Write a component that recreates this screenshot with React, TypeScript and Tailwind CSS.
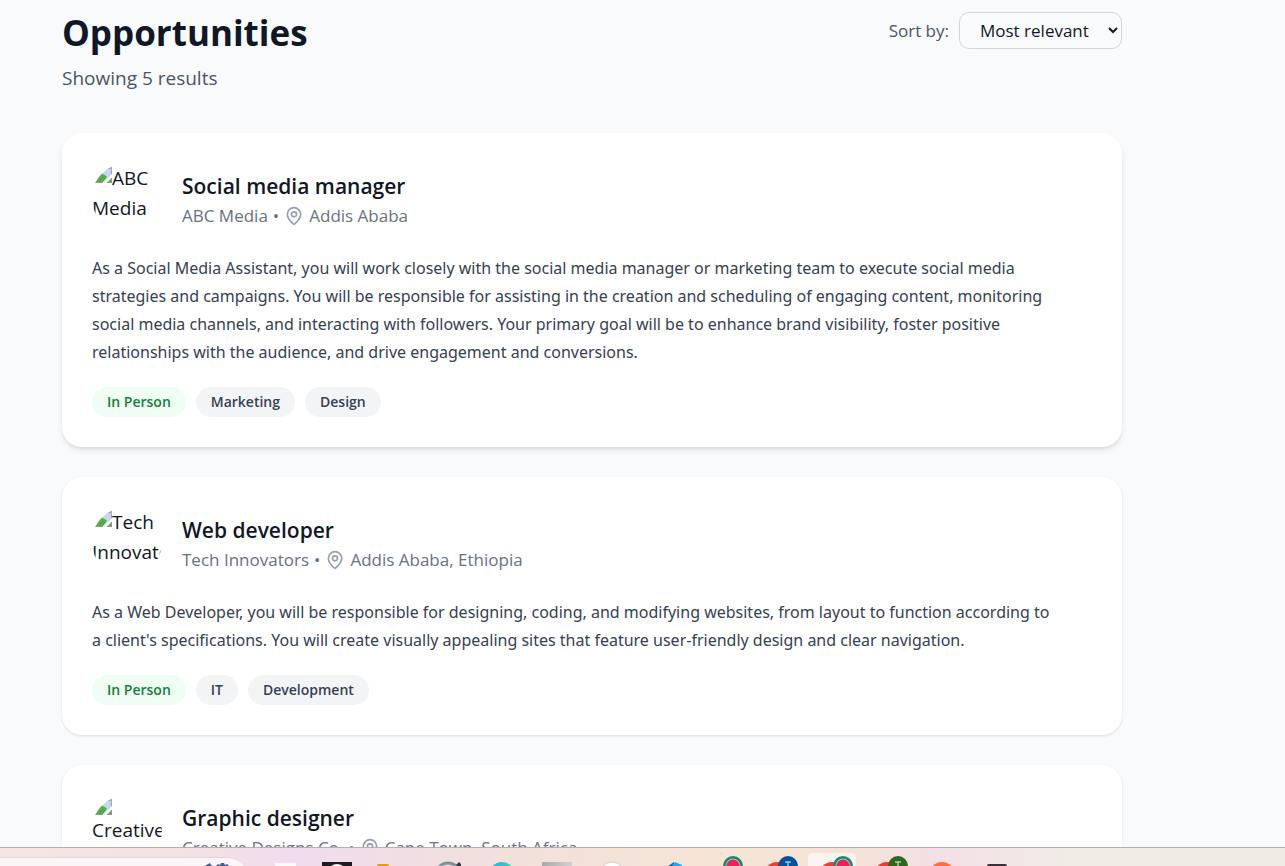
import { ReactNode } from "react";
import { MapPin } from "lucide-react";

type Job = {
  title: string;
  company: string;
  place: string;
  text: string;
  tags: string[];
  raised?: boolean;
};

const jobs: Job[] = [
  {
    title: "Social media manager",
    company: "ABC Media",
    place: "Addis Ababa",
    text: "As a Social Media Assistant, you will work closely with the social media manager or marketing team to execute social media strategies and campaigns. You will be responsible for assisting in the creation and scheduling of engaging content, monitoring social media channels, and interacting with followers. Your primary goal will be to enhance brand visibility, foster positive relationships with the audience, and drive engagement and conversions.",
    tags: ["Marketing", "Design"],
    raised: true,
  },
  {
    title: "Web developer",
    company: "Tech Innovators",
    place: "Addis Ababa, Ethiopia",
    text: "As a Web Developer, you will be responsible for designing, coding, and modifying websites, from layout to function according to a client's specifications. You will create visually appealing sites that feature user-friendly design and clear navigation.",
    tags: ["IT", "Development"],
  },
  {
    title: "Graphic designer",
    company: "Creative Designs Co.",
    place: "Cape Town, South Africa",
    text: "",
    tags: [],
  },
];

function BrokenImage() {
  return (
    <svg viewBox="0 0 20 20" className="float-left size-5" aria-hidden="true">
      <path d="M2 2h17v17H2z" fill="#c3d6f8" />
      <path d="M10 4h10v8h-1V6h-9z" fill="#a5a8ac" />
      <path d="M2 20v-4c4-6 9-6 12-3l1 1-5 6z" fill="#56ad3b" />
      <path d="M16 19l3-3v3z" fill="#56ad3b" />
      <path d="M11 20l9-9v3l-6 6z" fill="#fff" />
      <path d="M2 19h9l-1 1H2zM15 19h4v-4h1v5h-5z" fill="#8f9497" />
    </svg>
  );
}

function Pill({ children, green }: { children: ReactNode; green?: boolean }) {
  return (
    <li
      className={`h-[30px] rounded-full px-[15px] text-[14px] leading-[30px] font-semibold ${
        green ? "bg-green-50 text-[#15803d]" : "bg-gray-100 text-gray-700"
      }`}
    >
      {children}
    </li>
  );
}

function JobCard({ job }: { job: Job }) {
  return (
    <article className={`rounded-[20px] bg-white p-[30px] ${job.raised ? "shadow-md" : "shadow-sm"}`}>
      <div className="flex items-center gap-5">
        <div className="size-[70px] shrink-0 overflow-hidden rounded-full text-[19px] leading-[30px] text-gray-900">
          <BrokenImage />
          {job.company}
        </div>
        <div className="pt-1">
          <h2 className="text-[21px] leading-[32px] font-semibold text-gray-900">{job.title}</h2>
          <p className="flex items-center gap-[5px] text-[17px] leading-[28px] text-gray-500">
            <span>{job.company}</span>
            <span>•</span>
            <MapPin className="size-5 text-gray-400" strokeWidth={2} />
            <span>{job.place}</span>
          </p>
        </div>
      </div>
      <p className="my-[21px] pr-[30px] font-['Noto_Sans','Open_Sans',sans-serif] text-[16px] leading-[28px] text-gray-700">
        {job.text}
      </p>
      <ul className="flex flex-wrap gap-[10px]">
        <Pill green>In Person</Pill>
        {job.tags.map((t) => (
          <Pill key={t}>{t}</Pill>
        ))}
      </ul>
    </article>
  );
}

function Slot({ children, active }: { children: ReactNode; active?: boolean }) {
  return (
    <svg width="55" height="18" viewBox="0 0 55 18" className="shrink-0" aria-hidden="true">
      {active && <rect x="3" y="5" width="48" height="40" rx="4" fill="#fbf3ee" />}
      {children}
    </svg>
  );
}

function RingBadge() {
  return (
    <>
      <circle cx="38" cy="18" r="10" fill="#128a70" />
      <circle cx="38" cy="18" r="7.5" fill="#9bc9b5" />
      <circle cx="38" cy="18" r="6.5" fill="#e8235a" />
    </>
  );
}

function Taskbar() {
  return (
    <footer className="flex h-[19px] shrink-0 overflow-hidden border-t border-[#b5b1b0] bg-[linear-gradient(90deg,#f5e6e4_0%,#f2e2e2_14%,#f1dcef_23%,#f2e0dc_38%,#f6e5d5_58%,#f5e2d8_67%,#f3dfe6_73%,#f1ece6_83%,#f0ece3_100%)]">
      <svg width="255" height="18" viewBox="0 0 255 18" className="shrink-0" aria-hidden="true">
        <rect x="-30" y="9.5" width="278" height="40" rx="20" fill="#fcf5f8" stroke="#e6d6df" />
        <path d="M205 18l3-2 2-1 1 2 2 1zM216 18l2-2 2 1 1-2h3l1 2 2-1 2 2z" fill="#4b5c8c" />
      </svg>
      <div className="flex">
        <Slot><rect x="20" y="15" width="21" height="9" fill="#fbf9f9" /></Slot>
        <Slot>
          <rect x="12" y="14" width="30" height="9" fill="#1d1a22" />
          <circle cx="27" cy="26" r="10" fill="#f4f4f4" />
        </Slot>
        <Slot><rect x="12" y="16" width="12" height="8" rx="2" fill="#dfa00e" /></Slot>
        <Slot>
          <circle cx="28" cy="27" r="12" fill="#dce1e6" stroke="#868d96" strokeWidth="3" />
          <path d="M36 17l3-3 2 2v2h-4z" fill="#33363b" />
        </Slot>
        <Slot>
          <defs>
            <linearGradient id="wave">
              <stop stopColor="#25b4e6" />
              <stop offset="0.5" stopColor="#35bfcf" />
              <stop offset="1" stopColor="#55d98a" />
            </linearGradient>
          </defs>
          <circle cx="27" cy="27" r="13" fill="url(#wave)" />
        </Slot>
        <Slot>
          <defs>
            <linearGradient id="steel">
              <stop stopColor="#aaa9aa" />
              <stop offset="1" stopColor="#d2d2d2" />
            </linearGradient>
          </defs>
          <rect x="12" y="14" width="30" height="9" fill="url(#steel)" />
        </Slot>
        <Slot><circle cx="27" cy="26" r="12" fill="#fff" stroke="#d6cbc7" /></Slot>
        <Slot>
          <path d="M28 18l6-4v4z" fill="#0f6db5" />
          <path d="M32 18l3-4 7 3v1z" fill="#28a5ee" />
        </Slot>
        <Slot><RingBadge /></Slot>
        <Slot>
          <circle cx="27" cy="27" r="13" fill="#e6403a" />
          <circle cx="38" cy="18" r="10" fill="#03539b" />
          <path d="M35 14h6M38 14v4" stroke="#9fc2e0" strokeWidth="1.5" />
        </Slot>
        <Slot active>
          <circle cx="27" cy="27" r="13" fill="#e6403a" />
          <RingBadge />
        </Slot>
        <Slot>
          <circle cx="27" cy="27" r="13" fill="#e6403a" />
          <circle cx="38" cy="18" r="10" fill="#2f671f" />
          <path d="M35 14h6M38 14v4" stroke="#b4cdaa" strokeWidth="1.5" />
        </Slot>
        <Slot><circle cx="27" cy="27" r="13" fill="#fc6e3d" /></Slot>
        <Slot><rect x="17" y="16" width="20" height="9" rx="2" fill="#373038" /></Slot>
      </div>
    </footer>
  );
}

export default function App() {
  return (
    <div className="flex h-screen flex-col overflow-hidden bg-[#f9fafc] font-['Open_Sans','Noto_Sans',sans-serif]">
      <main className="min-h-0 flex-1 overflow-hidden pt-3 pr-[163px] pl-[62px]">
        <header className="mb-10 flex items-start justify-between">
          <div>
            <h1 className="text-[35px] leading-[42px] font-bold text-gray-900">Opportunities</h1>
            <p className="mt-[10px] text-[19px] leading-[29px] text-gray-600">Showing 5 results</p>
          </div>
          <div className="flex items-center gap-[10px]">
            <label htmlFor="sort" className="text-[17px] text-gray-600">
              Sort by:
            </label>
            <select
              id="sort"
              defaultValue="relevant"
              className="h-[37px] w-[163px] rounded-[10px] border border-gray-300 bg-transparent pl-4 text-[17px] text-gray-900"
            >
              <option value="relevant">Most relevant</option>
              <option value="newest">Newest</option>
            </select>
          </div>
        </header>
        <section className="flex flex-col gap-[30px]">
          {jobs.map((job) => (
            <JobCard key={job.title} job={job} />
          ))}
        </section>
      </main>
      <Taskbar />
    </div>
  );
}
